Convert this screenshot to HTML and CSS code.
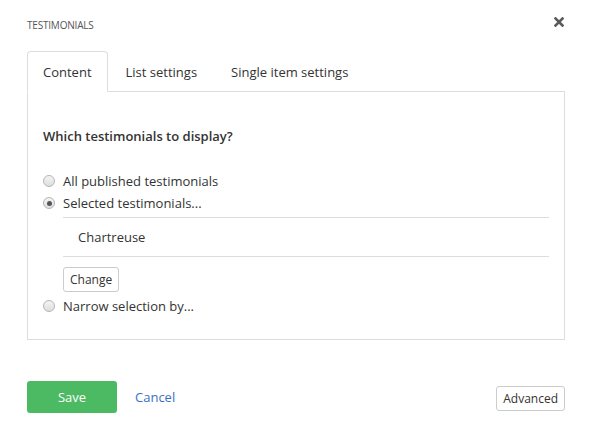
FILE: index.html
```html
<!DOCTYPE html>
<html lang="en">
<head>
    <meta charset="UTF-8">
    <meta name="viewport" content="width=device-width, initial-scale=1.0">
    <title>Testimonials</title>
    <link rel="stylesheet" href="styles.css">
</head>
<body>

<div class="dialog">

    <!-- Tiêu đề -->
    <div class="dialog-header">
        <span class="dialog-title">TESTIMONIALS</span>
        <button type="button" class="close-btn" aria-label="Close">
            <svg width="10" height="10" viewBox="0 0 10 10">
                <path d="M1.5 1.5 L8.5 8.5 M8.5 1.5 L1.5 8.5" stroke="#5a5a5a" stroke-width="2.6" stroke-linecap="square"/>
            </svg>
        </button>
    </div>

    <!-- Tabs -->
    <ul class="tabs">
        <li class="tab active">Content</li>
        <li class="tab">List settings</li>
        <li class="tab">Single item settings</li>
    </ul>

    <!-- Nội dung tab -->
    <div class="tab-panel">
        <h3 class="panel-heading">Which testimonials to display?</h3>

        <label class="radio-row">
            <input type="radio" name="display">
            <span>All published testimonials</span>
        </label>
        <label class="radio-row">
            <input type="radio" name="display" checked>
            <span>Selected testimonials...</span>
        </label>

        <div class="selected-block">
            <div class="selected-list">
                <div class="selected-item">Chartreuse</div>
            </div>
            <button type="button" class="btn btn-default btn-small">Change</button>
        </div>

        <label class="radio-row">
            <input type="radio" name="display">
            <span>Narrow selection by...</span>
        </label>
    </div>

    <!-- Footer -->
    <div class="dialog-footer">
        <div class="footer-left">
            <button type="button" class="btn btn-save">Save</button>
            <a href="#" class="cancel-link">Cancel</a>
        </div>
        <button type="button" class="btn btn-default btn-advanced">Advanced</button>
    </div>

</div>

</body>
</html>
```

FILE: styles.css
```css
/* Style chung */
body {
    margin: 0;
    font-family: "Open Sans", "Liberation Sans", sans-serif;
    font-size: 13px;
    color: #333;
    background: #fff;
}

.dialog {
    padding: 0 27px;
}

/* Header */
.dialog-header {
    display: flex;
    justify-content: space-between;
    align-items: center;
    height: 44px;
}

.dialog-title {
    font-size: 10px;
    color: #555;
    letter-spacing: -0.2px;
    margin-top: 5px;
}

.close-btn {
    border: none;
    background: none;
    padding: 0;
    margin-right: 1px;
    width: 10px;
    height: 10px;
    display: flex;
}

/* Tabs */
.tabs {
    list-style: none;
    margin: 7px 0 0;
    padding: 0;
    display: flex;
    border-bottom: 1px solid #ddd;
}

.tab {
    padding: 0 15px;
    height: 39px;
    line-height: 40px;
    margin-right: 2px;
    margin-bottom: -1px;
    border: 1px solid transparent;
    border-radius: 4px 4px 0 0;
    color: #333;
}

.tab.active {
    border-color: #ddd;
    border-bottom-color: #fff;
    background: #fff;
}

/* Panel */
.tab-panel {
    border: 1px solid #ddd;
    border-top: none;
    padding: 32px 15px 22px;
}

.panel-heading {
    margin: 0 0 24px;
    padding-top: 2px;
    font-size: 13px;
    font-weight: 600;
    line-height: 20px;
}

.radio-row {
    display: flex;
    align-items: center;
    height: 22px;
}

.radio-row input {
    appearance: none;
    -webkit-appearance: none;
    width: 12px;
    height: 12px;
    margin: 0 8px 0 0;
    border: 1px solid #b5b5b5;
    border-radius: 50%;
    background: linear-gradient(#f4f4f4, #dedede);
    display: grid;
    place-items: center;
}

.radio-row input:checked::after {
    content: "";
    width: 5px;
    height: 5px;
    border-radius: 50%;
    background: #555;
}

.selected-block {
    padding-left: 20px;
    margin-top: 3px;
}

.selected-list {
    border-top: 1px solid #ddd;
    border-bottom: 1px solid #ddd;
    margin-bottom: 10px;
}

.selected-item {
    padding: 0 15px;
    line-height: 38px;
}

/* Buttons */
.btn {
    font-family: inherit;
    font-size: 13px;
    cursor: pointer;
    border-radius: 3px;
}

.btn-default {
    background: #fff;
    border: 1px solid #ccc;
    color: #333;
}

.btn-small {
    height: 25px;
    padding: 0 6px;
    font-size: 12px;
    margin-bottom: 3px;
}

/* Footer */
.dialog-footer {
    display: flex;
    justify-content: space-between;
    align-items: flex-end;
    margin-top: 41px;
}

.footer-left {
    display: flex;
    align-items: center;
    gap: 18px;
}

.btn-save {
    width: 90px;
    height: 32px;
    border: none;
    background: #4cb963;
    color: #fff;
    font-size: 13px;
}

.cancel-link {
    color: #3a6fc9;
    text-decoration: none;
}

.btn-advanced {
    height: 25px;
    padding: 0 6px;
    font-size: 12px;
    margin-bottom: 2px;
}
```
